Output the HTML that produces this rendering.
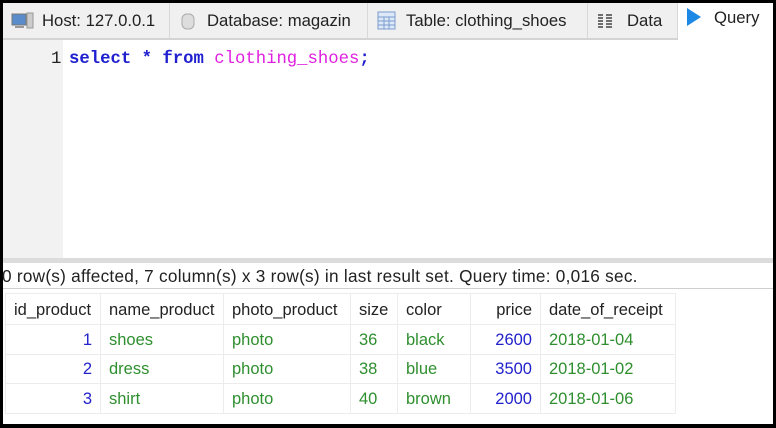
<!DOCTYPE html>
<html><head><meta charset="utf-8"><style>
*{margin:0;padding:0;box-sizing:border-box}
body{width:776px;height:428px;background:#000;position:relative;overflow:hidden;font-family:"Liberation Sans",sans-serif}
.a{position:absolute}
.tabbar{left:3px;top:3px;width:770px;height:37px;background:#f0f0f0;border-bottom:2px solid #d4d4d4}
.tab{position:absolute;top:0;height:35px;font-size:16.7px;color:#222;line-height:35px;border-right:1px solid #d8d8d8}
.ed{left:3px;top:40px;width:770px;height:218px;background:#fff}
.gut{left:3px;top:40px;width:60px;height:218px;background:#f2f2f2}
.code{font-family:"Liberation Mono",monospace;font-size:17.3px;top:50px;line-height:20px}
.sep{left:3px;top:258px;width:770px;height:5px;background:#dcdcdc}
.stat{left:3px;top:263px;width:770px;height:161px;background:#fff}
.st{left:2px;top:266px;font-size:17.2px;color:#222;white-space:nowrap;letter-spacing:0.26px}
.sl{left:3px;top:288px;width:770px;height:1px;background:#cfcfcf}
table{position:absolute;left:5px;top:293px;border-collapse:collapse;font-size:16.5px}
td{height:29.5px;border:1px solid #ececec;padding:2px 8px 0;white-space:nowrap}
tr.h td{color:#222;height:31px}
.n{color:#2222cc;text-align:right}
.g{color:#2f8f2f}
</style></head><body>
<div class="a tabbar">
 <div class="tab" style="left:0;width:167px">
  <svg class="a" style="left:8px;top:9px" width="24" height="18"><rect x="1" y="2" width="14" height="11" fill="#5a8ccc" stroke="#777"/><rect x="16" y="1" width="6" height="15" fill="#ccc" stroke="#999"/><rect x="4" y="14" width="9" height="2" fill="#999"/></svg>
  <span class="a" style="left:39px">Host: 127.0.0.1</span></div>
 <div class="tab" style="left:167px;width:198px">
  <svg class="a" style="left:10px;top:9px" width="16" height="19"><rect x="2" y="2" width="12" height="15" rx="5" fill="#ddd" stroke="#aaa"/></svg>
  <span class="a" style="left:37px">Database: magazin</span></div>
 <div class="tab" style="left:365px;width:220px">
  <svg class="a" style="left:9px;top:8px" width="20" height="20"><rect x="1" y="1" width="17" height="17" fill="#dde8f8" stroke="#7a9ccc"/><path d="M1 6H18M1 10H18M1 14H18M7 6V18M12 6V18" stroke="#7a9ccc"/></svg>
  <span class="a" style="left:38px">Table: clothing_shoes</span></div>
 <div class="tab" style="left:585px;width:90px">
  <svg class="a" style="left:9px;top:10px" width="16" height="16"><path d="M1 2H6M1 5H6M1 8H6M1 11H6M1 14H6M9 2H15M9 5H15M9 8H15M9 11H15M9 14H15" stroke="#444" stroke-width="1.5"/></svg>
  <span class="a" style="left:39px">Data</span></div>
 <div class="tab" style="left:675px;width:95px;background:#fff;height:37px;border:none">
  <svg class="a" style="left:8px;top:4px" width="16" height="22"><path d="M1 1L15 10L1 19Z" fill="#1e88e5"/></svg>
  <span class="a" style="left:36px;top:-3px">Query</span></div>
</div>
<div class="a ed"></div>
<div class="a gut"></div>
<div class="a code" style="left:51px;color:#222">1</div>
<div class="a code" style="left:69px;white-space:pre"><b style="color:#2020d0">select</b> <b style="color:#2020d0">*</b> <b style="color:#2020d0">from</b> <span style="color:#e020e0">clothing_shoes</span><b style="color:#2020d0">;</b></div>
<div class="a sep"></div>
<div class="a stat"></div>
<div class="a st">0 row(s) affected, 7 column(s) x 3 row(s) in last result set. Query time: 0,016 sec.</div>
<div class="a sl"></div>
<table>
<tr class="h"><td style="width:95px">id_product</td><td style="width:123px">name_product</td><td style="width:127px">photo_product</td><td style="width:47px">size</td><td style="width:73px">color</td><td style="width:70px;text-align:right">price</td><td style="width:135px">date_of_receipt</td></tr>
<tr><td class="n">1</td><td class="g">shoes</td><td class="g">photo</td><td class="g">36</td><td class="g">black</td><td class="n">2600</td><td class="g">2018-01-04</td></tr>
<tr><td class="n">2</td><td class="g">dress</td><td class="g">photo</td><td class="g">38</td><td class="g">blue</td><td class="n">3500</td><td class="g">2018-01-02</td></tr>
<tr><td class="n">3</td><td class="g">shirt</td><td class="g">photo</td><td class="g">40</td><td class="g">brown</td><td class="n">2000</td><td class="g">2018-01-06</td></tr>
</table>
</body></html>
